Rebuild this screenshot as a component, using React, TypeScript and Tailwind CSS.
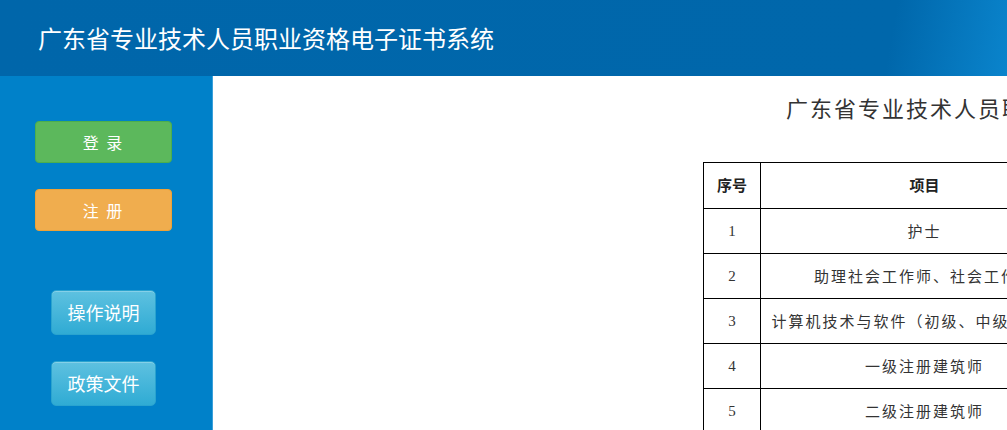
const items = [
  { no: "1", name: "护士" },
  { no: "2", name: "助理社会工作师、社会工作师" },
  { no: "3", name: "计算机技术与软件（初级、中级、高级）" },
  { no: "4", name: "一级注册建筑师" },
  { no: "5", name: "二级注册建筑师" },
  { no: "6", name: "注册城乡规划师" },
];

const cjk = "font-['Microsoft_YaHei','Noto_Sans_CJK_SC',sans-serif]";

function SideButton({ label, tone }: { label: string; tone: "green" | "orange" }) {
  const color =
    tone === "green"
      ? "bg-[#5cb85c] border-[#4cae4c]"
      : "bg-[#f0ad4e] border-[#eea236]";
  return (
    <button
      className={`w-[137px] h-[42px] rounded-[4px] border text-white text-[16px] tracking-[2px] ${color}`}
    >
      {label}
    </button>
  );
}

function InfoButton({ label }: { label: string }) {
  return (
    <button className="w-[105px] h-[45px] rounded-[5px] border border-[#2aa3cf] bg-[linear-gradient(180deg,#5ec1e0_0%,#2fabd4_100%)] text-white text-[18px] shadow-[inset_0_1px_0_rgba(255,255,255,0.25)]">
      {label}
    </button>
  );
}

export default function App() {
  return (
    <div className={`w-[1007px] h-[430px] overflow-hidden flex flex-col ${cjk}`}>
      <header className="h-[76px] shrink-0 flex items-center pl-[38px] bg-[linear-gradient(100deg,#0066aa_0%,#0067ab_88%,#0a84cc_100%)]">
        <h1 className="text-white text-[24px] leading-none pb-[1px]">
          广东省专业技术人员职业资格电子证书系统
        </h1>
      </header>
      <div className="flex flex-1 min-h-0">
        <aside className="w-[213px] shrink-0 bg-[#0081c9] border-r border-[#3aa0da] flex flex-col pt-[45px]">
          <div className="flex flex-col gap-[26px] pl-[35px]">
            <SideButton label="登 录" tone="green" />
            <SideButton label="注 册" tone="orange" />
          </div>
          <div className="flex flex-col gap-[26px] pl-[51px] mt-[59px]">
            <InfoButton label="操作说明" />
            <InfoButton label="政策文件" />
          </div>
        </aside>
        <main className="flex-1 bg-white overflow-hidden">
          <div className="w-[900px] pl-[490px] pt-[18px]">
            <h2 className="ml-[83px] text-[22px] tracking-[2px] text-[#333] leading-[26px] whitespace-nowrap">
              广东省专业技术人员职业资格电子证书覆盖项目一览表
            </h2>
            <table className="mt-[42px] border-collapse border border-black text-[#333]">
              <thead>
                <tr className="h-[46px]">
                  <th className="w-[57px] border border-black text-[15px] font-bold text-[#222]">
                    序号
                  </th>
                  <th className="w-[328px] border border-black text-[15px] font-bold text-[#222]">
                    项目
                  </th>
                </tr>
              </thead>
              <tbody>
                {items.map((it) => (
                  <tr key={it.no} className="h-[45px]">
                    <td className="border border-black text-center text-[15px] font-['Liberation_Serif',serif]">
                      {it.no}
                    </td>
                    <td className="border border-black text-center text-[15px] tracking-[2px] whitespace-nowrap px-1">
                      {it.name}
                    </td>
                  </tr>
                ))}
              </tbody>
            </table>
          </div>
        </main>
      </div>
    </div>
  );
}
